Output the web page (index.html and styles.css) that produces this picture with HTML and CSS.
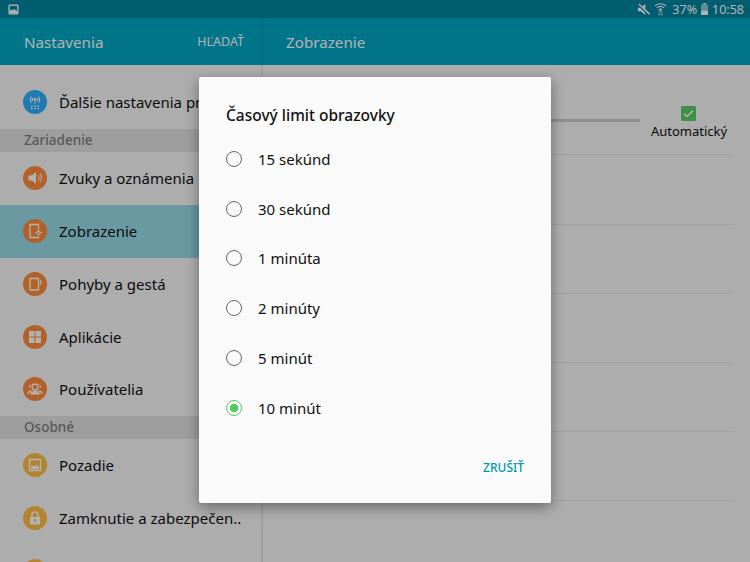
FILE: index.html
```html
<!DOCTYPE html>
<html lang="sk">
<head>
<meta charset="utf-8">
<title>Nastavenia</title>
<link rel="stylesheet" href="styles.css">
</head>
<body>
<div class="screen">
  <header class="status">
    <svg class="status-pic" viewBox="0 0 12 12"><rect x="0.5" y="0.5" width="11" height="11" rx="1.5" fill="#fff"/><rect x="2" y="2" width="8" height="8" fill="#00869f"/><path d="M2 10V7.500l2-1.500 1.500 1 1-1.500L10 8v2z" fill="#fff"/></svg>
    <div class="status-right">
      <svg class="ic-mute" viewBox="0 0 14 14"><path d="M1 5h3l5-4v12L4 9H1z" fill="#fff"/><path d="M1.500 1.500l11.500 11" stroke="#00869f" stroke-width="3"/><path d="M2 1l11.500 11" stroke="#fff" stroke-width="1.500"/></svg>
      <svg class="ic-wifi" viewBox="0 0 14 14"><g fill="none" stroke="#fff" stroke-width="1.200"><path d="M1 3.700c3.500-3.200 8.500-3.200 12 0"/><path d="M3 5.800c2.500-2.100 5.500-2.100 8 0"/><path d="M5 7.800c1.300-.9 2.700-.9 4 0"/></g><circle cx="7" cy="9.500" r="1.100" fill="#fff"/><path d="M5.500 11v3M8.500 11v3" stroke="#fff"/></svg>
      <span class="status-pct">37%</span>
      <svg class="ic-batt" viewBox="0 0 8 14"><rect x="2.500" y="0" width="3" height="1.500" fill="#fff"/><rect y="1.500" width="8" height="12.500" fill="#fff" opacity=".55"/><rect y="9" width="8" height="5" fill="#fff"/></svg>
      <span class="status-time">10:58</span>
    </div>
  </header>
  <div class="panes">
    <aside class="side">
      <div class="appbar side-bar"><span class="appbar-title">Nastavenia</span><span class="search">HĽADAŤ</span></div>
      <div class="row row-first"><span class="dot dot-blue"><svg viewBox="0 0 24 24"><g fill="none" stroke="#fff" stroke-width="1.100"><path d="M8.500 6.500c-1.500 2-1.500 4 0 6M15.500 6.500c1.500 2 1.500 4 0 6"/><path d="M10 8c-.7 1-.7 2 0 3M14 8c.7 1 .7 2 0 3"/></g><path d="M11.500 9.500h1v4h-1z" fill="#fff"/><circle cx="12" cy="9.300" r="1.200" fill="#fff"/><path d="M8 15.500h1.500v1.500H8zM11.200 15.500h1.500v1.500h-1.500zM14.500 15.500H16v1.500h-1.500zM8 18h1.500v1.200H8zM11.200 18h1.500v1.200h-1.500zM14.500 18H16v1.200h-1.500z" fill="#fff"/></svg></span><span class="row-text">Ďalšie nastavenia pripojenia</span></div>
      <div class="section">Zariadenie</div>
      <div class="row"><span class="dot dot-orange"><svg viewBox="0 0 24 24"><path d="M5.500 9.500H9l4-3.500v12l-4-3.500H5.500z" fill="#fff"/><path d="M15 9c1.200 2 1.200 4 0 6M17 7.500c1.800 3 1.800 6 0 9" fill="none" stroke="#fff" stroke-width="1"/></svg></span><span class="row-text">Zvuky a oznámenia</span></div>
      <div class="row row-active"><span class="dot dot-orange"><svg viewBox="0 0 24 24"><path d="M7 5.500h8.500v13H7z" fill="none" stroke="#fff" stroke-width="1.300"/><circle cx="15.500" cy="13.500" r="4" fill="#ff8c3c"/><circle cx="15.500" cy="13.500" r="1.500" fill="none" stroke="#fff" stroke-width="1.200"/><path d="M15.500 10v1.500M15.500 15.500V17M12 13.500h1.500M17.500 13.500H19" stroke="#fff" stroke-width="1.200"/></svg></span><span class="row-text">Zobrazenie</span></div>
      <div class="row"><span class="dot dot-orange"><svg viewBox="0 0 24 24"><path d="M7 6.500h8.500v11.500H7z" fill="none" stroke="#fff" stroke-width="1.400"/><path d="M18 8c.3 2 0 3.500-1 5" fill="none" stroke="#fff" stroke-width="1.100"/></svg></span><span class="row-text">Pohyby a gestá</span></div>
      <div class="row"><span class="dot dot-orange"><svg viewBox="0 0 24 24"><path d="M6 6h5.500v5.500H6zM12.500 6H18v5.500h-5.500zM6 12.500h5.500V18H6zM12.500 12.500H18V18h-5.500z" fill="#fff"/></svg></span><span class="row-text">Aplikácie</span></div>
      <div class="row"><span class="dot dot-orange"><svg viewBox="0 0 24 24"><circle cx="12" cy="10" r="3" fill="none" stroke="#fff" stroke-width="1.300"/><path d="M5 17c0-2.500 2-3 3.500-3.500M19 17c0-2.500-2-3-3.500-3.500" fill="none" stroke="#fff" stroke-width="1.200"/><path d="M7 17.500c0-2.500 2.500-3.500 5-3.500s5 1 5 3.500z" fill="#fff"/><path d="M8 7.500c-1.500.3-2 2-1 3.500M16 7.500c1.500.3 2 2 1 3.500" fill="none" stroke="#fff"/></svg></span><span class="row-text">Používatelia</span></div>
      <div class="section">Osobné</div>
      <div class="row"><span class="dot dot-amber"><svg viewBox="0 0 24 24"><path d="M6.500 6.500h11v11h-11z" fill="none" stroke="#fff" stroke-width="1.400"/><path d="M8 16v-2.500l1.500-1 1.500 1 1-1.500 1.500 1.500 1-1 1.500 1.500V16z" fill="#fff"/></svg></span><span class="row-text">Pozadie</span></div>
      <div class="row"><span class="dot dot-amber"><svg viewBox="0 0 24 24"><path d="M9 11V9a3 3 0 0 1 6 0v2" fill="none" stroke="#fff" stroke-width="1.500"/><path d="M7 11h10v7.500H7z" fill="#fff"/><circle cx="12" cy="14.500" r="1.300" fill="#ffbe45"/></svg></span><span class="row-text">Zamknutie a zabezpečen..</span></div>
      <div class="row"><span class="dot dot-amber"></span><span class="row-text"></span></div>
    </aside>
    <main class="detail">
      <div class="appbar detail-bar"><span class="appbar-title">Zobrazenie</span></div>
      <div class="list">
        <div class="item item-bright">
          <div class="slider"></div>
          <div class="auto">
            <svg class="check" viewBox="0 0 16 16"><rect width="16" height="16" rx="1.500" fill="#59cf62"/><path d="M3.500 8.200l3 3 6-6" fill="none" stroke="#fff" stroke-width="1.600"/></svg>
            <span class="auto-label">Automatický</span>
          </div>
        </div>
        <div class="item"></div>
        <div class="item"></div>
        <div class="item"></div>
        <div class="item"></div>
        <div class="item"></div>
      </div>
    </main>
  </div>
  <div class="scrim">
    <section class="dialog">
      <h2 class="dialog-title">Časový limit obrazovky</h2>
      <ul class="options">
        <li class="option"><span class="radio"></span>15 sekúnd</li>
        <li class="option"><span class="radio"></span>30 sekúnd</li>
        <li class="option"><span class="radio"></span>1 minúta</li>
        <li class="option"><span class="radio"></span>2 minúty</li>
        <li class="option"><span class="radio"></span>5 minút</li>
        <li class="option"><span class="radio radio-on"></span>10 minút</li>
      </ul>
      <div class="actions"><span class="cancel">ZRUŠIŤ</span></div>
    </section>
  </div>
</div>
</body>
</html>
```
FILE: styles.css
```css
* { box-sizing: border-box; }
html, body { margin: 0; padding: 0; }
body { font-family: "Noto Sans", sans-serif; background: #f7f7f7; }
.screen { position: relative; width: 750px; height: 562px; overflow: hidden; background: #f8f8f8; }

.status { height: 18px; background: #00869f; display: flex; align-items: center; justify-content: space-between; padding: 0 6px 0 8px; color: #fff; }
.status-pic { width: 11px; height: 11px; }
.status-right { display: flex; align-items: center; font-size: 12.500px; }
.ic-mute { width: 13px; height: 13px; margin-right: 4px; }
.ic-wifi { width: 13px; height: 14px; margin-right: 5px; }
.status-pct { margin-right: 4px; }
.ic-batt { width: 7px; height: 12px; margin-right: 4px; }

.panes { display: flex; height: 544px; }
.side { width: 263px; flex: none; border-right: 2px solid #e4e4e4; }
.detail { flex: 1; }

.appbar { height: 47px; background: #00a6c5; display: flex; align-items: center; color: #fff; }
.side-bar { justify-content: space-between; padding: 0 17px 0 24px; border-right: 2px solid #0098b5; margin-right: -2px; }
.detail-bar { padding-left: 23px; }
.appbar-title { font-size: 15.200px; }
.search { font-size: 12.500px; }

.row { height: 52.750px; display: flex; align-items: center; padding-left: 23px; color: #111; font-size: 15px; white-space: nowrap; overflow: hidden; }
.row-first { height: 64px; padding-top: 10px; }
.row-active { background: #98dce9; }
.dot { width: 24px; height: 24px; border-radius: 50%; flex: none; margin-right: 12px; }
.dot svg { display: block; width: 24px; height: 24px; }
.dot-blue { background: #2fb0ff; }
.dot-orange { background: #ff8c3c; }
.dot-amber { background: #ffbe45; }
.section { height: 23px; background: #e2e2e2; color: #7f7f7f; font-size: 13.500px; line-height: 23px; padding-left: 24px; font-weight: 500; }

.list { padding: 0 18px 0 23px; }
.item { height: 69px; border-bottom: 1px solid #e6e6e6; }
.item-bright { height: 90px; position: relative; display: flex; justify-content: flex-end; }
.item-bright + .item { height: 70px; }
.slider { position: absolute; left: 0; right: 92px; top: 54px; height: 3px; background: #cccccc; }
.auto { width: 80px; margin-right: 3px; margin-top: 41px; display: flex; flex-direction: column; align-items: center; color: #111; font-size: 13px; }
.check { width: 15px; height: 15px; display: block; margin-right: 1px; }
.auto-label { line-height: 17px; margin-top: 2px; }

.scrim { position: absolute; inset: 0; background: rgba(0, 0, 0, 0.3); }
.dialog { position: absolute; left: 199px; top: 77px; width: 352px; height: 426px; background: #fafafa; border-radius: 2px; box-shadow: 0 4px 14px rgba(0, 0, 0, 0.4); padding: 27px 27px 0; display: flex; flex-direction: column; }
.dialog-title { margin: 0; font-size: 15.500px; font-weight: 500; line-height: 22px; color: #111; }
.options { list-style: none; margin: 8px 0 0; padding: 0; }
.option { height: 49.800px; display: flex; align-items: center; font-size: 15px; color: #111; }
.radio { width: 16px; height: 16px; border-radius: 50%; border: 1.300px solid #666; margin-right: 16px; flex: none; }
.radio-on { border-color: #52c95e; background: radial-gradient(circle, #52c95e 0 4px, transparent 4.500px); }
.actions { margin-top: auto; display: flex; justify-content: flex-end; padding: 0 0 26px; }
.cancel { font-size: 12px; font-weight: 500; color: #0097b2; line-height: 18px; }
```
